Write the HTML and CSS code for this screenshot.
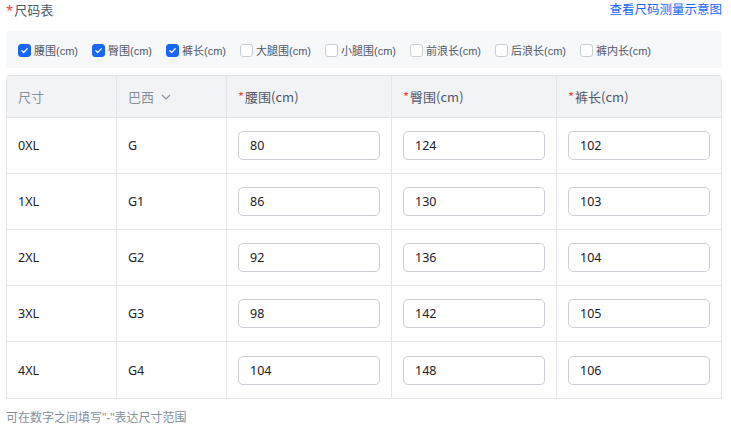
FILE: index.html
```html
<!DOCTYPE html>
<html lang="zh">
<head>
<meta charset="utf-8">
<link rel="stylesheet" href="styles.css">
</head>
<body>
<div class="page">
  <div class="top">
    <div class="title"><span class="req">*</span>尺码表</div>
    <a class="link">查看尺码测量示意图</a>
  </div>
  <div class="checks">
    <label class="chk"><span class="box on"><svg viewBox="0 0 14 14"><path d="M3.5 7.2 L6 9.6 L10.6 4.6" fill="none" stroke="#fff" stroke-width="1.6" stroke-linecap="round" stroke-linejoin="round"/></svg></span>腰围(cm)</label>
    <label class="chk"><span class="box on"><svg viewBox="0 0 14 14"><path d="M3.5 7.2 L6 9.6 L10.6 4.6" fill="none" stroke="#fff" stroke-width="1.6" stroke-linecap="round" stroke-linejoin="round"/></svg></span>臀围(cm)</label>
    <label class="chk"><span class="box on"><svg viewBox="0 0 14 14"><path d="M3.5 7.2 L6 9.6 L10.6 4.6" fill="none" stroke="#fff" stroke-width="1.6" stroke-linecap="round" stroke-linejoin="round"/></svg></span>裤长(cm)</label>
    <label class="chk"><span class="box"></span>大腿围(cm)</label>
    <label class="chk"><span class="box"></span>小腿围(cm)</label>
    <label class="chk"><span class="box"></span>前浪长(cm)</label>
    <label class="chk"><span class="box"></span>后浪长(cm)</label>
    <label class="chk"><span class="box"></span>裤内长(cm)</label>
  </div>
  <div class="table">
    <div class="th">尺寸</div>
    <div class="th">巴西 <svg class="chev" viewBox="0 0 12 12"><path d="M2 4 L6 8 L10 4" fill="none" stroke="#86909c" stroke-width="1.1"/></svg></div>
    <div class="th strong"><span class="req">*</span>腰围(cm)</div>
    <div class="th strong"><span class="req">*</span>臀围(cm)</div>
    <div class="th strong last"><span class="req">*</span>裤长(cm)</div>

    <div class="td">0XL</div><div class="td">G</div>
    <div class="td"><div class="inp">80</div></div><div class="td"><div class="inp">124</div></div><div class="td last"><div class="inp">102</div></div>

    <div class="td">1XL</div><div class="td">G1</div>
    <div class="td"><div class="inp">86</div></div><div class="td"><div class="inp">130</div></div><div class="td last"><div class="inp">103</div></div>

    <div class="td">2XL</div><div class="td">G2</div>
    <div class="td"><div class="inp">92</div></div><div class="td"><div class="inp">136</div></div><div class="td last"><div class="inp">104</div></div>

    <div class="td">3XL</div><div class="td">G3</div>
    <div class="td"><div class="inp">98</div></div><div class="td"><div class="inp">142</div></div><div class="td last"><div class="inp">105</div></div>

    <div class="td bottom">4XL</div><div class="td bottom">G4</div>
    <div class="td bottom"><div class="inp">104</div></div><div class="td bottom"><div class="inp">148</div></div><div class="td bottom last"><div class="inp">106</div></div>
  </div>
  <div class="hint">可在数字之间填写<span class="q">"-"</span>表达尺寸范围</div>
</div>
</body>
</html>
```
FILE: styles.css
```css
* { box-sizing: border-box; }
html, body { margin: 0; padding: 0; background: #fff; }
body {
  font-family: "Noto Sans", "Noto Sans CJK SC", sans-serif;
  color: #1d2129;
}
.page { padding: 0 9px 0 6px; width: 731px; }
.top {
  display: flex;
  justify-content: space-between;
  align-items: center;
  height: 20px;
}
.title { font-size: 13px; color: #4e5969; line-height: 20px; }
.req { color: #f53f3f; margin-right: 1px; }
.link { font-size: 12.5px; color: #1966ff; line-height: 20px; }
.checks {
  margin-top: 11px;
  height: 37px;
  background: #f7f8fa;
  display: flex;
  align-items: center;
  padding: 1px 0 0 12px;
  gap: 14px;
}
.chk {
  display: flex;
  align-items: center;
  font-size: 11px;
  color: #4e5969;
  gap: 3px;
  font-family: "Liberation Sans", "Noto Sans CJK SC", sans-serif;
}
.box {
  width: 13px; height: 13px;
  border: 1px solid #c9cdd4;
  border-radius: 3px;
  background: #fff;
  display: flex;
}
.box.on { background: #1966ff; border-color: #1966ff; }
.box svg { width: 11px; height: 11px; }
.table {
  margin-top: 7px;
  display: grid;
  grid-template-columns: 110px 110px 165px 165px 165px;
  border: 1px solid #e5e6eb;
  border-radius: 4px 4px 0 0;
  overflow: hidden;
  width: 716px;
}
.th {
  height: 42px;
  background: #f2f3f5;
  display: flex;
  align-items: center;
  padding-left: 11px;
  font-size: 13px;
  color: #86909c;
  border-right: 1px solid #e5e6eb;
  border-bottom: 1px solid #e5e6eb;
  font-family: "Noto Sans CJK SC", sans-serif;
}
.th.strong { color: #4e5969; }
.chev { width: 12px; height: 12px; margin-left: 6px; }
.td {
  height: 56px;
  display: flex;
  align-items: center;
  padding-left: 11px;
  font-size: 12.5px;
  color: #1d2129;
  border-right: 1px solid #e5e6eb;
  border-bottom: 1px solid #e5e6eb;
}
.last { border-right: none; }
.td.bottom { border-bottom: none; }
.inp {
  width: 142px;
  height: 29px;
  border: 1px solid #c9cdd4;
  border-radius: 5px;
  padding-left: 11px;
  display: flex;
  align-items: center;
  font-size: 12.5px;
  color: #1d2129;
}
.hint {
  margin-top: 9px;
  font-size: 12px;
  color: #86909c;
  font-family: "Noto Sans CJK SC", sans-serif;
}
.q { font-family: "Liberation Sans", sans-serif; }
```
